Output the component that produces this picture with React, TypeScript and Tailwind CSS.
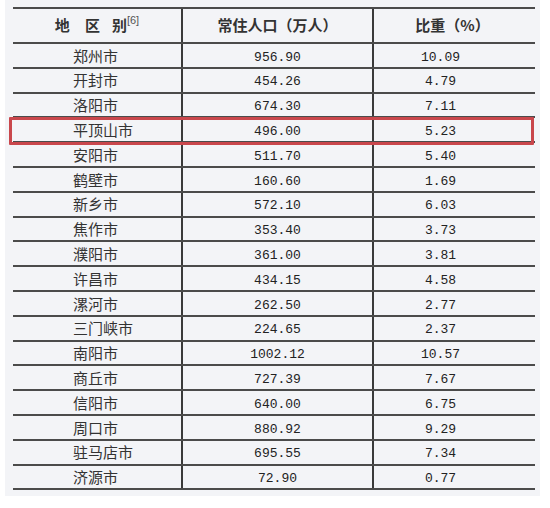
const rows = [
  ["郑州市", "956.90", "10.09"],
  ["开封市", "454.26", "4.79"],
  ["洛阳市", "674.30", "7.11"],
  ["平顶山市", "496.00", "5.23"],
  ["安阳市", "511.70", "5.40"],
  ["鹤壁市", "160.60", "1.69"],
  ["新乡市", "572.10", "6.03"],
  ["焦作市", "353.40", "3.73"],
  ["濮阳市", "361.00", "3.81"],
  ["许昌市", "434.15", "4.58"],
  ["漯河市", "262.50", "2.77"],
  ["三门峡市", "224.65", "2.37"],
  ["南阳市", "1002.12", "10.57"],
  ["商丘市", "727.39", "7.67"],
  ["信阳市", "640.00", "6.75"],
  ["周口市", "880.92", "9.29"],
  ["驻马店市", "695.55", "7.34"],
  ["济源市", "72.90", "0.77"],
];

const cjk = { fontFamily: '"Noto Sans CJK SC", "Noto Sans", sans-serif' };
const mono = { fontFamily: '"Liberation Mono", monospace' };

export default function App() {
  return (
    <div className="w-[550px] h-[508px] bg-white">
      <div className="ml-[5px] w-[535px] h-[496px] bg-[#f3f4f7] pt-[7px]">
        <div className="relative ml-[8px] w-[522px] border-t-2 border-[#4b4b4b] text-[#333]">
          {/* header */}
          <div className="flex h-[35px] border-b-2 border-[#4b4b4b] font-bold text-[15px]" style={cjk}>
            <div className="w-[170px] flex items-center justify-center border-r-2 border-[#3a3a3a]">
              <span className="mr-[15px]">地</span>
              <span className="mr-[12px]">区</span>
              <span>别</span>
              <span className="relative -top-[5px] text-[11px] font-normal text-[#555]" style={{ fontFamily: '"Liberation Sans", sans-serif' }}>
                [6]
              </span>
            </div>
            <div className="w-[191px] flex items-center justify-center border-r-2 border-[#3a3a3a]">
              常住人口（万人）
            </div>
            <div className="flex-1 flex items-center justify-center pr-[4px]">比重（%）</div>
          </div>

          {rows.map(([name, pop, pct]) => (
            <div key={name} className="flex h-[24.8px] border-b-2 border-[#4b4b4b]">
              <div
                className="w-[170px] flex items-center pl-[60px] pt-[1px] text-[15px] border-r-2 border-[#3a3a3a]"
                style={cjk}
              >
                {name}
              </div>
              <div
                className="w-[191px] flex items-center justify-center pt-[4px] text-[13px] text-[#222] border-r-2 border-[#3a3a3a]"
                style={mono}
              >
                {pop}
              </div>
              <div className="flex-1 flex items-center justify-center pr-[28px] pt-[4px] text-[13px] text-[#222]" style={mono}>
                {pct}
              </div>
            </div>
          ))}

          {/* highlight around 平顶山市 */}
          <div className="absolute left-[-4px] top-[108px] w-[525px] h-[28px] border-[3px] border-[#c9474c] rounded-[1px]" />
        </div>
      </div>
    </div>
  );
}
